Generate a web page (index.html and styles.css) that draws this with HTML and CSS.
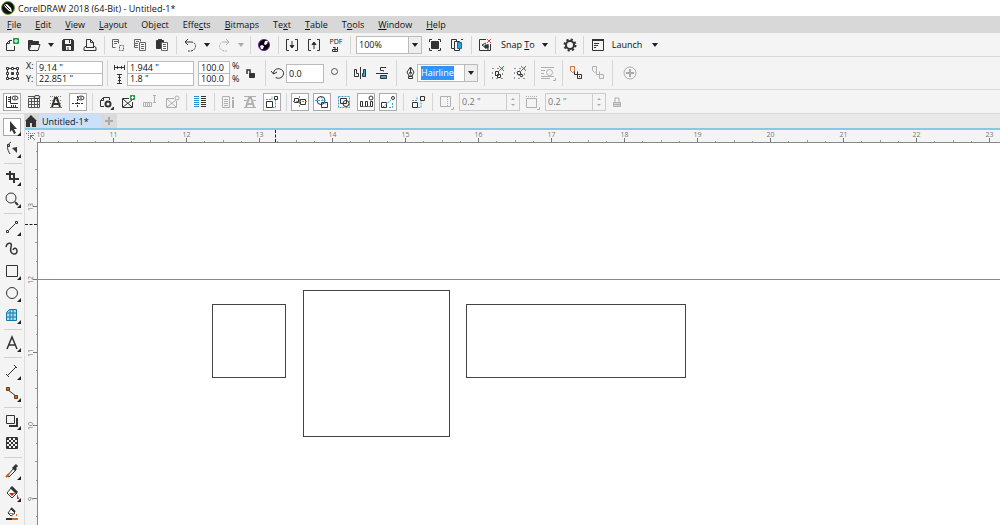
FILE: index.html
```html
<!DOCTYPE html>
<html lang="en">
<head>
  <meta charset="UTF-8">
  <meta name="viewport" content="width=device-width, initial-scale=1.0">
  <title>CorelDRAW 2018 (64-Bit) - Untitled-1*</title>
  <link rel="stylesheet" href="styles.css">
</head>
<body>
  <header>
    <div class="title-bar">
      <svg class="logo" viewBox="0 0 14 14"><circle cx="7" cy="7" r="6.500" fill="#111" stroke="#6fae3a"/><path d="M3 4l3-1 4 4 1 4-3-1-4-4z" fill="#fff" stroke="none"/><path d="M4 4l5 5" stroke="#111"/></svg>
      <span>CorelDRAW 2018 (64-Bit) - Untitled-1*</span>
    </div>
    <nav class="menu">
      <a href="#file"><u>F</u>ile</a>
      <a href="#edit"><u>E</u>dit</a>
      <a href="#view"><u>V</u>iew</a>
      <a href="#layout"><u>L</u>ayout</a>
      <a href="#object">Ob<u>j</u>ect</a>
      <a href="#effects">Effe<u>c</u>ts</a>
      <a href="#bitmaps"><u>B</u>itmaps</a>
      <a href="#text">Te<u>x</u>t</a>
      <a href="#table"><u>T</u>able</a>
      <a href="#tools">T<u>o</u>ols</a>
      <a href="#window"><u>W</u>indow</a>
      <a href="#help"><u>H</u>elp</a>
    </nav>

    <!-- standard toolbar -->
    <div class="toolbar standard">
      <button class="tool" aria-label="New"><svg viewBox="0 0 16 16"><path d="M8 3.500H5.500l-3 3v7h8V9M2.500 6.500h3v-3"/><path class="green" d="M9.500 1.500h5v5h-5z"/><path stroke="#fff" d="M12 2v4M10 4h4"/></svg></button>
      <button class="tool" aria-label="Open"><svg viewBox="0 0 16 16"><path class="solid" d="M2.500 3.500h4l1 1h5v2h-8l-2 6z"/><path d="M5 7.500h9l-2 6H3z"/></svg></button>
      <button class="drop" aria-label="Open recent"><i class="caret"></i></button>
      <button class="tool" aria-label="Save"><svg viewBox="0 0 16 16"><path class="solid" d="M2.500 3.500l1-1h9l1 1v10h-11z"/><path fill="#f4f4f4" stroke="none" d="M5 3h6v4H5zM6 9h5v4H6z"/><path d="M9.500 3v3M8 10v3"/></svg></button>
      <button class="tool" aria-label="Print"><svg viewBox="0 0 16 16"><path d="M4.500 10V2.500h4l3 3V10M8.500 2.500v3h3M4.500 9L2 10.500v3h12v-3L11.500 9M4 10.500h8"/></svg></button>
      <span class="sep"></span>
      <button class="tool" aria-label="Cut"><svg class="mid" viewBox="0 0 16 16"><path d="M5.500 10.500h-3v-8h6v4M4 4.500h4M4 6.500h3"/><path stroke-dasharray="2 1" d="M9.500 8.500h4v5h-4z"/></svg></button>
      <button class="tool" aria-label="Copy"><svg class="mid" viewBox="0 0 16 16"><path d="M6 10.500H2.500v-8h6v2M4 4.500h3M3 6.500h3M3 8.500h3M7.500 5.500h6v8h-6zM9 7.500h3M9 9.500h3M9 11.500h3"/></svg></button>
      <button class="tool" aria-label="Paste"><svg viewBox="0 0 16 16"><path class="solid" d="M2.500 3.500h2v-1h3v1h2v3h-3v5h-4z"/><path fill="#fff" stroke="#666" d="M7.500 5.500h6v8h-6zM9 7.500h3M9 9.500h3M9 11.500h3"/></svg></button>
      <span class="sep"></span>
      <button class="tool" aria-label="Undo"><svg viewBox="0 0 16 16"><path d="M6 2L3 5l3 3M3 5h6"/><path stroke-dasharray="2 1" d="M9 5c6 0 6 8 0 9H6"/></svg></button>
      <button class="drop" aria-label="Undo list"><i class="caret"></i></button>
      <button class="tool" aria-label="Redo" disabled><svg viewBox="0 0 16 16"><path d="M10 2l3 3-3 3M13 5H8"/><path stroke-dasharray="2 1" d="M8 5c-6 0-6 8 0 9h3"/></svg></button>
      <button class="drop" aria-label="Redo list" disabled><i class="caret"></i></button>
      <span class="sep"></span>
      <button class="tool" aria-label="Search content"><svg viewBox="0 0 16 16"><circle cx="8" cy="8" r="5.500" fill="#080410" stroke="#6c2794"/><path fill="#fff" stroke="none" d="M4 9l2-1 2 1-1 3H5zM8 7l1-3h3l-1 3-2 1z"/></svg></button>
      <span class="sep"></span>
      <button class="tool" aria-label="Import"><svg viewBox="0 0 16 16"><path d="M5 2.500H2.500v11H5M11 2.500h2.500v11H11M8 4v7"/><path class="solid" d="M6 8.500h4L8 11z"/></svg></button>
      <button class="tool" aria-label="Export"><svg viewBox="0 0 16 16"><path d="M5 2.500H2.500v11H5M11 2.500h2.500v11H11M8 5v7"/><path class="solid" d="M6 7.500h4L8 5z"/></svg></button>
      <button class="tool pdf" aria-label="Publish to PDF"><span>PDF</span><svg class="tiny" viewBox="0 0 8 6"><path d="M1 1.500h2M.500 3.500h5v2h-5zM3 1v4M5.500 1v4"/></svg></button>
      <span class="sep"></span>
      <div class="combo zoom-level">
        <select aria-label="Zoom level"><option>100%</option></select>
        <span class="arrow"><i class="caret"></i></span>
      </div>
      <button class="tool" aria-label="Full screen preview"><svg viewBox="0 0 16 16"><path class="solid" d="M4.500 4.500h7v7h-7z"/><path d="M2.500 5V2.500H5M11 2.500h2.500V5M13.500 11v2.500H11M5 13.500H2.500V11"/></svg></button>
      <button class="tool" aria-label="Show rulers"><svg viewBox="0 0 16 16"><path d="M6 11.500H2.500v-9h5v2M5.500 4.500h5v9h-5z"/><path fill="#29a3df" stroke="#176c96" d="M8.500 5.500h4v6h-4z"/><path d="M12 2.500h2"/></svg></button>
      <span class="sep"></span>
      <button class="tool" aria-label="Snap off"><svg viewBox="0 0 16 16"><path d="M9 2.500H2.500v11h11V7"/><path d="M9 6L5 8l4 3M11 7v6"/><path class="solid" d="M8 8h3v3H8z"/><path class="red" d="M10 2l4 4M14 2l-4 4"/></svg></button>
      <button class="text-button"><span>Snap <u>T</u>o</span><i class="caret"></i></button>
      <span class="sep"></span>
      <button class="tool" aria-label="Options"><svg viewBox="0 0 16 16"><circle cx="8" cy="8" r="4" stroke-width="2"/><circle cx="8" cy="8" r="5.500" stroke-width="2" stroke-dasharray="2.160 2.160"/></svg></button>
      <span class="sep"></span>
      <button class="tool" aria-label="Application launcher"><svg viewBox="0 0 16 16"><path d="M2.500 2.500h11v11h-11z"/><path stroke-width="2" d="M2 3h12"/><path d="M4 6.500h5M4 8.500h4M4 10.500h2"/></svg></button>
      <button class="text-button launch"><span>Launch</span><i class="caret"></i></button>
    </div>

    <!-- property bar -->
    <div class="toolbar property">
      <button class="tool" aria-label="Object origin"><svg viewBox="0 0 16 16"><path d="M2.500 2.500h2v2h-2zM7.500 2.500h2v2h-2zM12.500 2.500h2v2h-2zM2.500 7.500h2v2h-2zM12.500 7.500h2v2h-2zM2.500 12.500h2v2h-2zM7.500 12.500h2v2h-2zM12.500 12.500h2v2h-2zM5 3.500h2M10 3.500h2M5 13.500h2M10 13.500h2M3.500 5v2M3.500 10v2M13.500 5v2M13.500 10v2"/><path class="solid" d="M7.500 7.500h2v2h-2z"/></svg></button>
      <div class="pair names"><label for="x-pos">X:</label><label for="y-pos">Y:</label></div>
      <div class="pair fields"><input type="text" id="x-pos" value="9.14 &quot;"><input type="text" id="y-pos" value="22.851 &quot;"></div>
      <span class="sep"></span>
      <svg class="size-icon" viewBox="0 0 16 24"><path d="M3.500 4v5M13.500 4v5M4 6.500h9M6.500 5v3M10.500 5v3M6 13.500h5M6 22.500h5M8.500 14v8M7 16.500h3M7 19.500h3"/></svg>
      <div class="pair fields"><input type="text" aria-label="Width" value="1.944 &quot;"><input type="text" aria-label="Height" value="1.8 &quot;"></div>
      <div class="pair scale"><input type="text" id="scale-x" value="100.0"><input type="text" id="scale-y" value="100.0"></div>
      <div class="pair percent"><label for="scale-x">%</label><label for="scale-y">%</label></div>
      <button class="tool" aria-label="Lock ratio"><svg viewBox="0 0 16 16"><path d="M4 9V5h3v4" stroke-width="1.500"/><path class="solid" d="M6.500 8.500h5v4h-5z"/></svg></button>
      <span class="sep"></span>
      <label class="rotate" for="angle" aria-label="Angle"><svg viewBox="0 0 16 16"><path d="M1 6l2.500 3L7 7M3.500 9c0-8 11-6 10 0-1 5-7 5-8 3"/></svg></label>
      <input class="angle" type="text" id="angle" value="0.0">
      <span class="degree"></span>
      <span class="sep"></span>
      <button class="tool" aria-label="Mirror horizontally"><svg viewBox="0 0 16 16"><path d="M2.500 4.500h2v4h2v3h-4zM8.500 2v12"/><path fill="#48a9d0" d="M13.500 4.500h-2v4h-1v3h3z"/></svg></button>
      <button class="tool" aria-label="Mirror vertically"><svg viewBox="0 0 16 16"><path d="M12 2.500H6.500v3h3v1M2 8.500h12"/><path fill="#48a9d0" d="M12.500 13.500h-6v-3h6z"/></svg></button>
      <span class="sep"></span>
      <label class="pen" for="outline" aria-label="Outline width"><svg viewBox="0 0 12 16"><path d="M6.500 2L3 7l2 4h3l2-4zM6.500 3v5M4.500 13.500h4v-2h-4z"/><circle cx="6.500" cy="8" r="1"/></svg></label>
      <div class="combo outline">
        <select id="outline"><option>Hairline</option></select>
        <span class="arrow"><i class="caret"></i></span>
      </div>
      <span class="sep"></span>
      <button class="tool" aria-label="Convert outline"><svg viewBox="0 0 16 16"><path stroke-dasharray="1 4" d="M2.500 3.500h10v10h-10z"/><path d="M5.500 6.500h3v4h-3zM7.500 9.500h3v3h-3z"/><path class="red" d="M9 1l5 5M14 1L9 6"/></svg></button>
      <button class="tool" aria-label="Break curve"><svg viewBox="0 0 16 16"><path stroke-dasharray="1 4" d="M2.500 3.500h10v10h-10z"/><path d="M5 7l3-1 1 3-3 1zM8 9l3 1-1 2-2-1z"/><path class="red" d="M9 1l5 5M14 1L9 6"/></svg></button>
      <span class="sep"></span>
      <button class="tool" aria-label="Wrap text" disabled><svg viewBox="0 0 16 16"><path d="M1 2.500h13M1 5.500h4M1 8.500h3M1 11.500h13M1 13.500h9M13 15.500h2.500V13"/><circle cx="9.500" cy="7.500" r="3"/></svg></button>
      <span class="sep"></span>
      <button class="tool" aria-label="To front"><svg viewBox="0 0 16 16"><path stroke="#d57432" d="M2.500 1.500h4v5l-2 1-2-2z"/><path d="M6.500 6.500v3h3v-3M9.500 9.500h4v4h-4zM11 11.500h1"/></svg></button>
      <button class="tool" aria-label="To back" disabled><svg viewBox="0 0 16 16"><path d="M2.500 1.500h4v5l-2 1-2-2zM6.500 6.500v3h3v-3M9.500 9.500h4v4h-4z"/></svg></button>
      <span class="sep"></span>
      <button class="tool quick" aria-label="Quick customize"><svg viewBox="0 0 16 16"><circle cx="8" cy="8" r="6"/><path stroke-width="2" d="M8 4v8M4 8h8"/></svg></button>
    </div>

    <!-- layout toolbar -->
    <div class="toolbar layout">
      <button class="tool on" aria-label="Rulers"><svg viewBox="0 0 16 16"><path d="M2.500 2v11.500H14M6.500 2v7.500H14M4 3.500h2M4 5.500h2M4 7.500h2M7.500 11v2M9.500 11v2M11.500 11v2"/><ellipse cx="11" cy="4" rx="3" ry="2"/><path d="M11 3v2"/></svg></button>
      <button class="tool" aria-label="Document grid"><svg viewBox="0 0 16 16"><path stroke="#555" d="M2.500 4.500h11v9h-11zM2 7.500h12M2 10.500h12M5.500 4v10M8.500 4v10M11.500 4v10M2 2.500h6"/><ellipse cx="11" cy="3" rx="3" ry="1.500"/></svg></button>
      <button class="tool" aria-label="Baseline grid"><svg viewBox="0 0 16 16"><path stroke="#777" stroke-dasharray="1 1" d="M2 2.500h12M2 6.500h12M2 9.500h12"/><path stroke-width="2" d="M4 13L7 4h2l3 9M5 10h6"/><path stroke="#298ecf" d="M2 13.500h12"/></svg></button>
      <button class="tool on" aria-label="Guidelines"><svg viewBox="0 0 16 16"><path stroke-dasharray="2 1" d="M2 9.500h12M7.500 2v12"/><ellipse cx="11" cy="4" rx="3" ry="2"/><path d="M11 3v2"/></svg></button>
      <span class="sep"></span>
      <button class="tool" aria-label="Page layout"><svg viewBox="0 0 16 16"><path d="M6 12.500H2.500v-6l3-3h6V6M2.500 6.500h3v-3"/><circle cx="10" cy="10" r="2.500" stroke-width="2"/><path class="solid" d="M13 15.500h2.500V13z"/></svg></button>
      <button class="tool" aria-label="Add frame"><svg viewBox="0 0 16 16"><path d="M9 4.500H2.500v9h10V8M3 5l9 8M12 6L3 13"/><path class="green" d="M10.500 1.500h4v4h-4z"/><path stroke="#fff" d="M12.500 2v3M11 3.500h3"/></svg></button>
      <button class="tool" aria-label="Fit text" disabled><svg viewBox="0 0 16 16"><path d="M1.500 8.500h8v4h-8zM3.500 9v3M5.500 9v3M7.500 9v3M11 1.500h3M12.500 2v6M11 8.500h3"/></svg></button>
      <button class="tool" aria-label="Clear frame" disabled><svg viewBox="0 0 16 16"><path d="M10 4.500H2.500v9h10V7M3 5l9 8M12 6L3 13"/><circle cx="13" cy="4" r="2"/></svg></button>
      <span class="sep"></span>
      <button class="tool" aria-label="Columns"><svg viewBox="0 0 16 16"><path stroke="#298ecf" d="M2 2.500h5M2 4.500h5M2 6.500h5M2 8.500h5M2 10.500h5M2 12.500h5"/><path d="M9 2.500h5M9 4.500h5M9 6.500h5M9 8.500h5M9 10.500h5M9 12.500h5"/></svg></button>
      <span class="sep"></span>
      <button class="tool" aria-label="Text info" disabled><svg viewBox="0 0 16 16"><path d="M2.500 2.500h7v11h-7zM4 5.500h4M4 7.500h4M4 9.500h4M4 11.500h4"/><path stroke-width="2" d="M13 6v8M13 3v2"/></svg></button>
      <button class="tool" aria-label="Align to baseline" disabled><svg viewBox="0 0 16 16"><path d="M2 2.500h12M2 13.500h12M2 6.500h3M11 6.500h3"/><path stroke-width="2" d="M4 13L7 4h2l3 9M5 10h6"/></svg></button>
      <button class="tool on" aria-label="Snap to objects"><svg viewBox="0 0 16 16"><path d="M2.500 7.500h6v6h-6zM10.500 2.500h3v3h-3z"/><path class="blue" d="M2 5.500h6V2M8.500 13.500h3V6"/></svg></button>
      <span class="sep"></span>
      <button class="tool on" aria-label="Alignment guides"><svg viewBox="0 0 16 16"><path d="M2.500 4.500h4v4h-4zM8.500 5.500h5v5h-5z"/><path class="blue" d="M7.500 2v12M1 7.500h14"/></svg></button>
      <button class="tool on" aria-label="Dynamic guides"><svg viewBox="0 0 16 16"><circle cx="7" cy="6.500" r="4"/><path d="M7.500 8.500h6v5h-6z"/><path class="blue" d="M1 6.500h10M7 3l5 8"/></svg></button>
      <button class="tool" aria-label="Group guides"><svg viewBox="0 0 16 16"><path class="blue" d="M2.500 2.500h11v11h-11z"/><path d="M4.500 4.500h6v5h-6z"/><circle cx="10" cy="9.500" r="3"/></svg></button>
      <button class="tool on" aria-label="Even spacing"><svg viewBox="0 0 16 16"><path d="M2.500 7.500h2v5h-2zM7.500 7.500h2v5h-2zM12.500 7.500h2v5h-2z"/><path class="blue" d="M5 12.500h2M10 12.500h2"/><circle cx="13" cy="4" r="2"/></svg></button>
      <button class="tool on" aria-label="Even sizing"><svg viewBox="0 0 16 16"><path d="M1.500 8.500h5v5h-5z"/><path class="blue" d="M3 13l8-7M9 13.500h3.500V8"/><circle cx="13" cy="4" r="1.500"/></svg></button>
      <span class="sep wide"></span>
      <button class="tool" aria-label="Object snap"><svg viewBox="0 0 16 16"><path d="M2.500 8.500h5v5h-5zM10.500 2.500h4v4h-4z"/><path class="blue" d="M2 6.500h5V3M8 13.500h3V7"/></svg></button>
      <span class="sep"></span>
      <button class="tool" aria-label="Horizontal nudge" disabled><svg viewBox="0 0 16 16"><path d="M2.500 2.500h10v10h-10zM13 15.500h2.500V13"/><path stroke-dasharray="1 1" d="M9.500 3v10"/></svg></button>
      <div class="spin"><input type="text" aria-label="Horizontal distance" value="0.2 &quot;" disabled><span class="steps"><i class="up"></i><i class="down"></i></span></div>
      <button class="tool nudge" aria-label="Vertical nudge" disabled><svg viewBox="0 0 16 16"><path d="M2.500 4.500h10v9h-10zM13 15.500h2.500V13"/><path stroke-dasharray="1 1" d="M2 2.500h12"/></svg></button>
      <div class="spin"><input type="text" aria-label="Vertical distance" value="0.2 &quot;" disabled><span class="steps"><i class="up"></i><i class="down"></i></span></div>
      <button class="tool" aria-label="Lock distances" disabled><svg viewBox="0 0 16 16"><path d="M6 8V4h4v4"/><path d="M4.500 8.500h7v4h-7zM5 10.500h6" fill="#999"/></svg></button>
    </div>
  </header>

  <main>
    <aside class="toolbox">
      <button class="tool on fly" aria-label="Pick tool"><svg viewBox="0 0 16 16"><path class="solid" stroke="none" d="M6 2v11l2-2 2 4 2-1-2-4h3z"/></svg></button>
      <button class="tool fly" aria-label="Shape tool"><svg viewBox="0 0 16 16"><path d="M7 1C2 4 3 8 6 13"/><path d="M3.500 3.500h2v2h-2z"/><path class="solid" stroke="none" d="M8 7l5-1v6z"/></svg></button>
      <span class="sep"></span>
      <button class="tool fly" aria-label="Crop tool"><svg viewBox="0 0 16 16"><path stroke-width="2" d="M2 5h8v9M6 2v8h9"/></svg></button>
      <button class="tool fly" aria-label="Zoom tool"><svg viewBox="0 0 16 16"><circle cx="7" cy="7" r="5"/><path stroke-width="2" d="M11 11l3 3"/></svg></button>
      <span class="sep"></span>
      <button class="tool fly" aria-label="Freehand tool"><svg viewBox="0 0 16 16"><path d="M2.500 11.500h2v2h-2zM11.500 2.500h2v2h-2zM5 11l6-6"/></svg></button>
      <button class="tool" aria-label="Artistic media tool"><svg viewBox="0 0 16 16"><path stroke-width="1.500" d="M2 6c1-5 7-5 5 0-2 8 6 9 6 4 0-3-3-4-4-1"/></svg></button>
      <button class="tool fly" aria-label="Rectangle tool"><svg viewBox="0 0 16 16"><path d="M2.500 2.500h11v11h-11z"/></svg></button>
      <button class="tool fly" aria-label="Ellipse tool"><svg viewBox="0 0 16 16"><circle cx="8" cy="8" r="5.500"/></svg></button>
      <button class="tool fly" aria-label="Graph paper tool"><svg viewBox="0 0 16 16"><path fill="#a7def6" stroke="#19799f" d="M5.500 2.500h7v11h-10v-8zM2.500 6h10M2.500 10h10M6 2v12M9 2v12"/></svg></button>
      <span class="sep"></span>
      <button class="tool fly" aria-label="Text tool"><svg viewBox="0 0 16 16"><path stroke-width="1.500" d="M3 14L8 2l5 12M5 10h6"/></svg></button>
      <span class="sep"></span>
      <button class="tool fly" aria-label="Dimension tool"><svg viewBox="0 0 16 16"><path d="M3 13l9-9M2 11l3 3M10 2l3 3"/></svg></button>
      <button class="tool fly" aria-label="Connector tool"><svg viewBox="0 0 16 16"><path d="M4 5l8 6"/><path fill="#cd6c2a" stroke="#633d1d" d="M2.500 2.500h3v3h-3zM10.500 10.500h3v3h-3z"/></svg></button>
      <span class="sep"></span>
      <button class="tool fly" aria-label="Drop shadow tool"><svg viewBox="0 0 16 16"><path d="M2.500 2.500h8v8h-8z"/><path stroke-width="2" d="M5 13h8V5"/></svg></button>
      <button class="tool" aria-label="Transparency tool"><svg viewBox="0 0 16 16"><path d="M2.500 2.500h11v11h-11z"/><path stroke-width="2" stroke-dasharray="2 2" d="M3 4h10M3 8h10M3 12h10"/><path stroke-width="2" stroke-dasharray="2 2" stroke-dashoffset="2" d="M3 6h10M3 10h10"/></svg></button>
      <span class="sep"></span>
      <button class="tool fly" aria-label="Color eyedropper"><svg viewBox="0 0 16 16"><path d="M3 13l7-8 2 2-7 7z"/><path stroke="#c66020" stroke-width="2" d="M2 14l3-3"/><path stroke-width="3" d="M9 6l4-4M9 4l3 3"/></svg></button>
      <button class="tool fly" aria-label="Interactive fill"><svg viewBox="0 0 16 16"><path fill="#fff" d="M7 3l6 5-5 5-5-5z"/><path stroke-width="3" d="M7 2l6 6"/><path fill="#e11" stroke="none" d="M5 8h6l-3 3zM13 9l2 5h-2z"/></svg></button>
      <button class="tool" aria-label="Smart fill"><svg viewBox="0 0 16 16"><path fill="#fff" d="M7 2l4 4-4 3-3-3z"/><path stroke-width="2" d="M7 1l4 4"/><path stroke="#d36b25" d="M5 6.500h4M12.500 7v2"/><path stroke-width="2" d="M2 12h6"/><path stroke="#d36b25" stroke-width="2" d="M8 12h6"/></svg></button>
    </aside>

    <section class="document">
      <div class="tabs">
        <a class="home" href="#welcome" aria-label="Welcome screen"><svg viewBox="0 0 12 12"><path fill="#333" stroke="none" d="M6 0l6 6h-1v6H7V8H5v4H1V6H0z"/></svg></a>
        <a class="tab" href="#untitled">Untitled-1*</a>
        <button class="add" aria-label="New document"><svg viewBox="0 0 10 10"><path stroke="#aaa" stroke-width="2" d="M5 1v8M1 5h8"/></svg></button>
      </div>
      <div class="workspace">
        <div class="corner"><svg viewBox="0 0 10 10"><path stroke="#777" stroke-dasharray="1 1" d="M2.500 0v10M0 2.500h10"/><path stroke="#777" d="M4 4l5 5M4.500 8V4.500H8"/></svg></div>
        <div class="ruler-top">
          <span>10</span><span>11</span><span>12</span><span>13</span><span>14</span><span>15</span><span>16</span><span>17</span><span>18</span><span>19</span><span>20</span><span>21</span><span>22</span><span>23</span>
          <i class="pointer"></i>
        </div>
        <div class="ruler-left">
          <span></span><span>13</span><span>12</span><span>11</span><span>10</span><span>9</span>
          <i class="pointer"></i>
        </div>
        <svg class="canvas">
          <line class="page-edge" x1="0" y1="136.500" x2="100%" y2="136.500"/>
          <rect x="174.500" y="161.500" width="73" height="73"/>
          <rect x="265.500" y="147.500" width="146" height="146"/>
          <rect x="428.500" y="161.500" width="219" height="73"/>
        </svg>
      </div>
    </section>
  </main>
</body>
</html>
```
FILE: styles.css
```css
* {
  box-sizing: border-box;
}

body {
  margin: 0;
  height: 100vh;
  overflow: hidden;
  display: flex;
  flex-direction: column;
  font-family: "Open Sans", "Noto Sans", sans-serif;
  font-size: 9px;
  color: #111;
  background-color: #f4f4f4;
}

a {
  color: inherit;
  text-decoration: none;
}

button, input, select {
  font: inherit;
  color: inherit;
  margin: 0;
  padding: 0;
  border: none;
  border-radius: 0;
  background: none;
}

svg {
  width: 16px;
  height: 16px;
  flex: none;
  fill: none;
  stroke: #333;
}

.solid {
  fill: #333;
}

.mid {
  stroke: #666;
}

.green {
  fill: #16a045;
  stroke: #16a045;
}

.red {
  stroke: #e0444c;
}

.blue {
  stroke: #3a9fd0;
  stroke-dasharray: 2 1;
}

/* title and menu */
.title-bar {
  height: 16px;
  display: flex;
  align-items: center;
  gap: 3px;
  padding-left: 1px;
  background-color: #fff;
}

.logo {
  width: 14px;
  height: 14px;
}

.menu {
  height: 17px;
  display: flex;
  align-items: center;
  gap: 14px;
  padding-left: 7px;
  background-color: #d8d8d8;
}

u {
  text-underline-offset: 1px;
}

/* toolbars */
.toolbar {
  display: flex;
  align-items: center;
  padding-left: 1px;
  border-bottom: 1px solid #d9d9d9;
}

.standard {
  height: 24px;
}

.property {
  height: 33px;
}

.layout {
  height: 24px;
}

.tool {
  position: relative;
  width: 22px;
  height: 22px;
  flex: none;
  display: flex;
  align-items: center;
  justify-content: center;
}

.tool:disabled, .drop:disabled {
  opacity: 0.35;
}

.on::before {
  content: "";
  position: absolute;
  inset: 2px;
  border: 1px solid #aaa;
  background-color: #fff;
}

.on svg {
  position: relative;
}

.drop {
  width: 12px;
  height: 22px;
  flex: none;
  display: flex;
  align-items: center;
  justify-content: center;
}

.caret {
  border: 3px solid transparent;
  border-top: 4px solid #222;
  border-bottom: none;
}

.sep {
  width: 6px;
  height: 18px;
  flex: none;
  background: linear-gradient(#d5d5d5, #d5d5d5) center / 1px 100% no-repeat;
}

.property .sep {
  height: 26px;
}

.wide {
  width: 8px;
}

.pdf {
  flex-direction: column;
  font-size: 7px;
  line-height: 8px;
}

.tiny {
  width: 8px;
  height: 6px;
}

.text-button {
  display: flex;
  align-items: center;
  gap: 7px;
  padding: 0 5px;
}

.launch {
  gap: 10px;
  padding: 0 3px;
}

input, .combo {
  background-color: #fff;
  border: 1px solid #bbb;
}

input {
  padding-left: 2px;
}

.combo {
  display: flex;
  align-items: center;
  height: 18px;
  padding-left: 2px;
}

.combo select {
  appearance: none;
  line-height: 14px;
}

.arrow {
  width: 13px;
  height: 100%;
  margin-left: auto;
  display: flex;
  align-items: center;
  justify-content: center;
  border-left: 1px solid #bbb;
  background-color: #eee;
}

.zoom-level {
  width: 66px;
  margin: 0 2px 0 3px;
}

.outline {
  width: 61px;
  padding-left: 3px;
  margin-right: 3px;
}

.outline select {
  color: #fff;
  background-color: #3393f3;
}

.pair {
  display: flex;
  flex-direction: column;
  flex: none;
}

.pair input, .pair label {
  height: 13px;
  line-height: 12px;
}

.pair input + input {
  height: 12px;
  border-top: none;
}

.names {
  width: 13px;
  padding-left: 3px;
}

.fields input {
  width: 67px;
}

.fields + .sep {
  width: 8px;
}

.size-icon {
  height: 24px;
}

.scale {
  margin-left: 4px;
}

.scale input {
  width: 32px;
}

.percent {
  width: 10px;
  padding-left: 2px;
}

.rotate, .pen {
  display: flex;
}

.pen {
  padding-left: 4px;
}

.pen svg {
  width: 14px;
}

.rotate {
  padding-left: 2px;
}

.angle {
  width: 38px;
  height: 19px;
}

.degree {
  width: 7px;
  height: 7px;
  margin: 0 5px 4px 7px;
  border: 1px solid #555;
  border-radius: 50%;
}

.quick {
  margin-left: 4px;
}

.quick svg {
  stroke: #aaa;
}

.spin {
  display: flex;
  width: 61px;
  height: 18px;
  margin-left: 2px;
  border: 1px solid #ccc;
}

.spin input {
  width: 46px;
  border: none;
  color: #777;
  background-color: #f4f4f4;
}

.steps {
  flex: 1;
  display: flex;
  flex-direction: column;
  align-items: center;
  justify-content: space-evenly;
  border-left: 1px solid #ccc;
}

.up, .down {
  border: 2px solid transparent;
}

.up {
  border-top: none;
  border-bottom-color: #aaa;
}

.down {
  border-bottom: none;
  border-top-color: #aaa;
}

.nudge {
  margin-left: 1px;
}

/* toolbox */
main {
  flex: 1;
  min-height: 0;
  display: flex;
}

.toolbox {
  width: 25px;
  flex: none;
  padding: 2px 0 0 1px;
  border-right: 1px solid #ddd;
  overflow: hidden;
}

.toolbox .sep {
  display: block;
  width: 18px;
  height: 6px;
  margin-left: 3px;
  background: linear-gradient(#d0d0d0, #d0d0d0) center / 100% 1px no-repeat;
}

.fly::after {
  content: "";
  position: absolute;
  right: 2px;
  bottom: 2px;
  border: 2px solid #222;
  border-top-color: transparent;
  border-left-color: transparent;
}

/* document area */
.document {
  flex: 1;
  min-width: 0;
  display: flex;
  flex-direction: column;
}

.tabs {
  height: 16px;
  flex: none;
  display: flex;
  background-color: #e9e9e9;
  border-bottom: 2px solid #83c9ea;
}

.home {
  width: 14px;
  display: flex;
  align-items: center;
  background-color: #d8d8d8;
}

.home svg {
  width: 12px;
  height: 12px;
}

.tab {
  width: 62px;
  padding-left: 3px;
  line-height: 15px;
  background-color: #cbe0fb;
}

.add {
  width: 16px;
  display: flex;
  align-items: center;
  justify-content: center;
  background-color: #dadada;
}

.add svg {
  width: 10px;
  height: 10px;
}

.workspace {
  flex: 1;
  min-height: 0;
  display: grid;
  grid-template-columns: 12px 1fr;
  grid-template-rows: 12px 1fr;
}

.corner svg {
  display: block;
  width: 10px;
  height: 10px;
  margin: 1px;
}

.ruler-top, .ruler-left {
  position: relative;
  display: flex;
  overflow: hidden;
  font-size: 7px;
  line-height: 9px;
  color: #777;
}

/* one cell per inch, centred on its long tick */
.ruler-top span {
  width: 73px;
  flex: none;
  text-align: center;
  background:
    linear-gradient(#777, #777) 36px 100% / 1px 4px no-repeat,
    linear-gradient(#999, #999) 0 100% / 1px 2px no-repeat,
    linear-gradient(#999, #999) 18px 100% / 1px 1px no-repeat,
    linear-gradient(#999, #999) 54px 100% / 1px 1px no-repeat;
}

.ruler-top span:first-child {
  margin-left: -33px;
}

.ruler-left {
  flex-direction: column;
}

.ruler-left span {
  height: 73px;
  flex: none;
  writing-mode: vertical-rl;
  transform: rotate(180deg);
  text-align: center;
  padding-right: 1px;
  background:
    linear-gradient(#777, #777) 0 36px / 4px 1px no-repeat,
    linear-gradient(#999, #999) 0 0 / 2px 1px no-repeat,
    linear-gradient(#999, #999) 0 18px / 1px 1px no-repeat,
    linear-gradient(#999, #999) 0 54px / 1px 1px no-repeat;
}

.ruler-left span:first-child {
  margin-top: -45px;
}

.pointer {
  position: absolute;
}

.ruler-top .pointer {
  left: 238px;
  height: 100%;
  border-left: 1px dashed #222;
}

.ruler-left .pointer {
  top: 82px;
  width: 100%;
  border-top: 1px dashed #222;
}

.canvas {
  width: 100%;
  height: 100%;
  min-height: 0;
  stroke: #444;
  border-left: 1px solid #888;
  border-top: 1px solid #888;
  background-color: #fff;
}

.page-edge {
  stroke: #888;
}
```
